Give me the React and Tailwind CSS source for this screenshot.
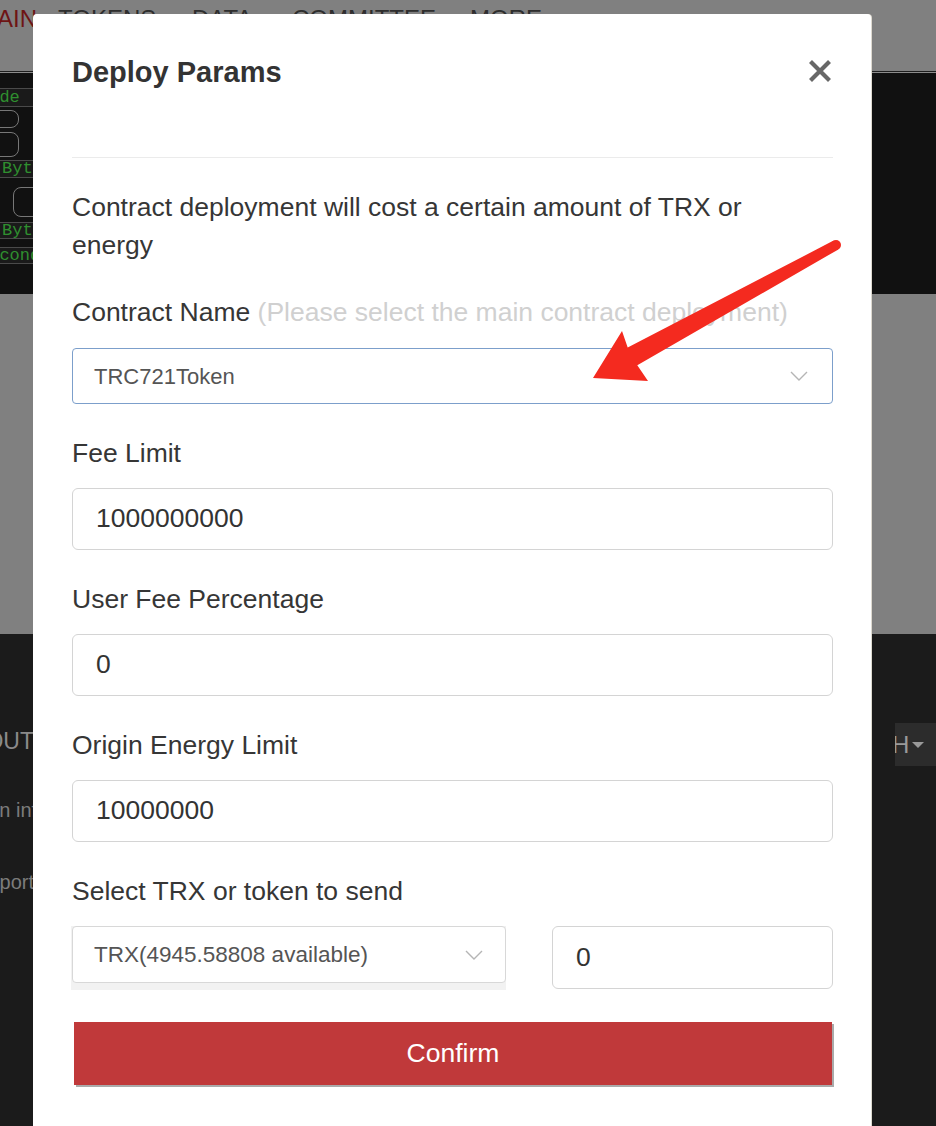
import React from "react";

function Chevron({ className }) {
  return (
    <svg className={className} width="18" height="10" viewBox="0 0 18 10" fill="none">
      <path d="M1 1l8 8 8-8" stroke="#b5b5b5" strokeWidth="1.4" />
    </svg>
  );
}

function Label({ children, className = "" }) {
  return <div className={`text-[26.5px] leading-[38px] text-[#363636] whitespace-nowrap ${className}`}>{children}</div>;
}

function TextInput({ value, className = "" }) {
  return (
    <div className={`h-[62px] border border-[#d4d4d4] rounded-[6px] flex items-center px-[23px] text-[26.5px] text-[#333] ${className}`}>
      {value}
    </div>
  );
}

export default function App() {
  return (
    <div className="relative w-[936px] h-[1126px] overflow-hidden bg-[#1b1b1b] font-['Liberation_Sans',Arial,sans-serif]">
      {/* page behind the modal, dimmed */}
      <div className="h-[71px] bg-[#808080] flex items-start pt-[1px] text-[24px] text-[#2e2e2e] whitespace-nowrap">
        <div className="w-[61px] -ml-[3px] text-[#6e1414]">AIN</div>
        <div className="w-[134px]">TOKENS</div>
        <div className="w-[100px]">DATA</div>
        <div className="w-[178px]">COMMITTEE</div>
        <div>MORE</div>
      </div>
      <div className="h-[1px] bg-[#1e1e1e]" />
      <div className="h-[1px] bg-[#8c8c8c]" />
      <div className="h-[221px] bg-[#111] font-['Liberation_Mono',monospace] text-[17px] text-[#2f8f2f]">
        <div className="w-[34px] overflow-hidden flex flex-col pt-[15px]">
          <div className="h-[19px] border-y border-[#4a4a4a] bg-[#1a1a1a] leading-[17px] whitespace-nowrap -ml-[21px]">code</div>
          <div className="mt-[3px] h-[18px] w-[40px] -ml-[21px] border border-[#777] rounded-[8px]" />
          <div className="mt-[4px] h-[25px] w-[40px] -ml-[21px] border border-[#777] rounded-[8px]" />
          <div className="mt-[3px] h-[18px] border-y border-[#4a4a4a] bg-[#1a1a1a] leading-[16px] whitespace-nowrap pl-[2px]">Bytecode</div>
          <div className="mt-[9px] h-[30px] w-[40px] ml-[13px] border border-[#777] rounded-[8px]" />
          <div className="mt-[5px] h-[17px] border-y border-[#4a4a4a] bg-[#1a1a1a] leading-[15px] whitespace-nowrap pl-[2px]">Bytecode</div>
          <div className="mt-[8px] h-[17px] border-y border-[#4a4a4a] bg-[#1a1a1a] leading-[15px] whitespace-nowrap -ml-[21px]">Second</div>
        </div>
      </div>
      <div className="h-[340px] bg-[#808080]" />
      <div className="flex justify-between text-[#7c7c7c]">
        <div className="w-[34px] overflow-hidden flex flex-col items-end whitespace-nowrap">
          <div className="mt-[90px] text-[23px] text-[#8a8a8a]">ABOUT</div>
          <div className="mt-[36px] self-start -ml-[30px] text-[20px]">Tron info</div>
          <div className="mt-[42px] self-start -ml-[36px] text-[20px]">Support</div>
        </div>
        <div className="mt-[89px] h-[43px] w-[41px] bg-[#2c2c2c] flex items-center text-[24px] text-[#9a9a9a] overflow-hidden whitespace-nowrap">
          <span className="-ml-[3px]">H</span>
          <span className="ml-[3px] border-x-[6px] border-x-transparent border-t-[6px] border-t-[#9a9a9a]" />
        </div>
      </div>

      {/* modal */}
      <div className="absolute left-[33px] top-[14px] w-[838px] h-[1130px] bg-white rounded-t-[4px] shadow-[1px_0_0_#ddd9cf] pl-[39px] pr-[38px]">
        <div className="pt-[41px] flex items-center justify-between h-[75px]">
          <div className="text-[29px] leading-[34px] font-bold text-[#333]">Deploy Params</div>
          <svg width="24" height="24" viewBox="0 0 24 24" className="mr-[1px] -mt-[3px]">
            <path d="M2.5 2.5l19 19M21.5 2.5l-19 19" stroke="#676767" strokeWidth="4.2" />
          </svg>
        </div>
        <div className="mt-[68px] h-[1px] bg-[#ebebeb]" />
        <p className="mt-[30px] text-[26.5px] leading-[38px] text-[#363636] pr-[40px]">
          Contract deployment will cost a certain amount of TRX or energy
        </p>
        <Label className="mt-[29px]">
          Contract Name <span className="text-[#d0d0d0]">(Please select the main contract deployment)</span>
        </Label>
        <div className="mt-[17px] h-[56px] border border-[#7c9fcb] rounded-[4px] flex items-center justify-between pl-[21px] pr-[24px] text-[22px] text-[#555]">
          <span>TRC721Token</span>
          <Chevron />
        </div>
        <Label className="mt-[30px]">Fee Limit</Label>
        <TextInput className="mt-[16px]" value="1000000000" />
        <Label className="mt-[30px]">User Fee Percentage</Label>
        <TextInput className="mt-[16px]" value="0" />
        <Label className="mt-[30px]">Origin Energy Limit</Label>
        <TextInput className="mt-[16px]" value="10000000" />
        <Label className="mt-[30px]">Select TRX or token to send</Label>
        <div className="mt-[16px] flex gap-[46px] items-start">
          <div className="w-[435px] bg-[#f2f2f2] pb-[7px] -ml-[1px] pl-[1px]">
            <div className="h-[57px] bg-white border border-[#d8d8d8] rounded-[4px] flex items-center justify-between pl-[21px] pr-[22px] text-[22.5px] text-[#555]">
              <span>TRX(4945.58808 available)</span>
              <Chevron />
            </div>
          </div>
          <TextInput className="flex-1 h-[63px]" value="0" />
        </div>
        <button className="mt-[32px] ml-[2px] w-[758px] h-[63px] bg-[#c0393a] text-white text-[26.5px] shadow-[2px_2px_0_#aaaaaa]">
          Confirm
        </button>
      </div>

      {/* annotation arrow */}
      <svg className="absolute inset-0 pointer-events-none" width="936" height="1126" viewBox="0 0 936 1126">
        <polygon points="833.6,240.6 838.4,249.4 637.3,365.2 648,381 593,378 622,331 627.7,347.6" fill="#f42a1f" />
        <circle cx="836" cy="245" r="5" fill="#f42a1f" />
      </svg>
    </div>
  );
}
